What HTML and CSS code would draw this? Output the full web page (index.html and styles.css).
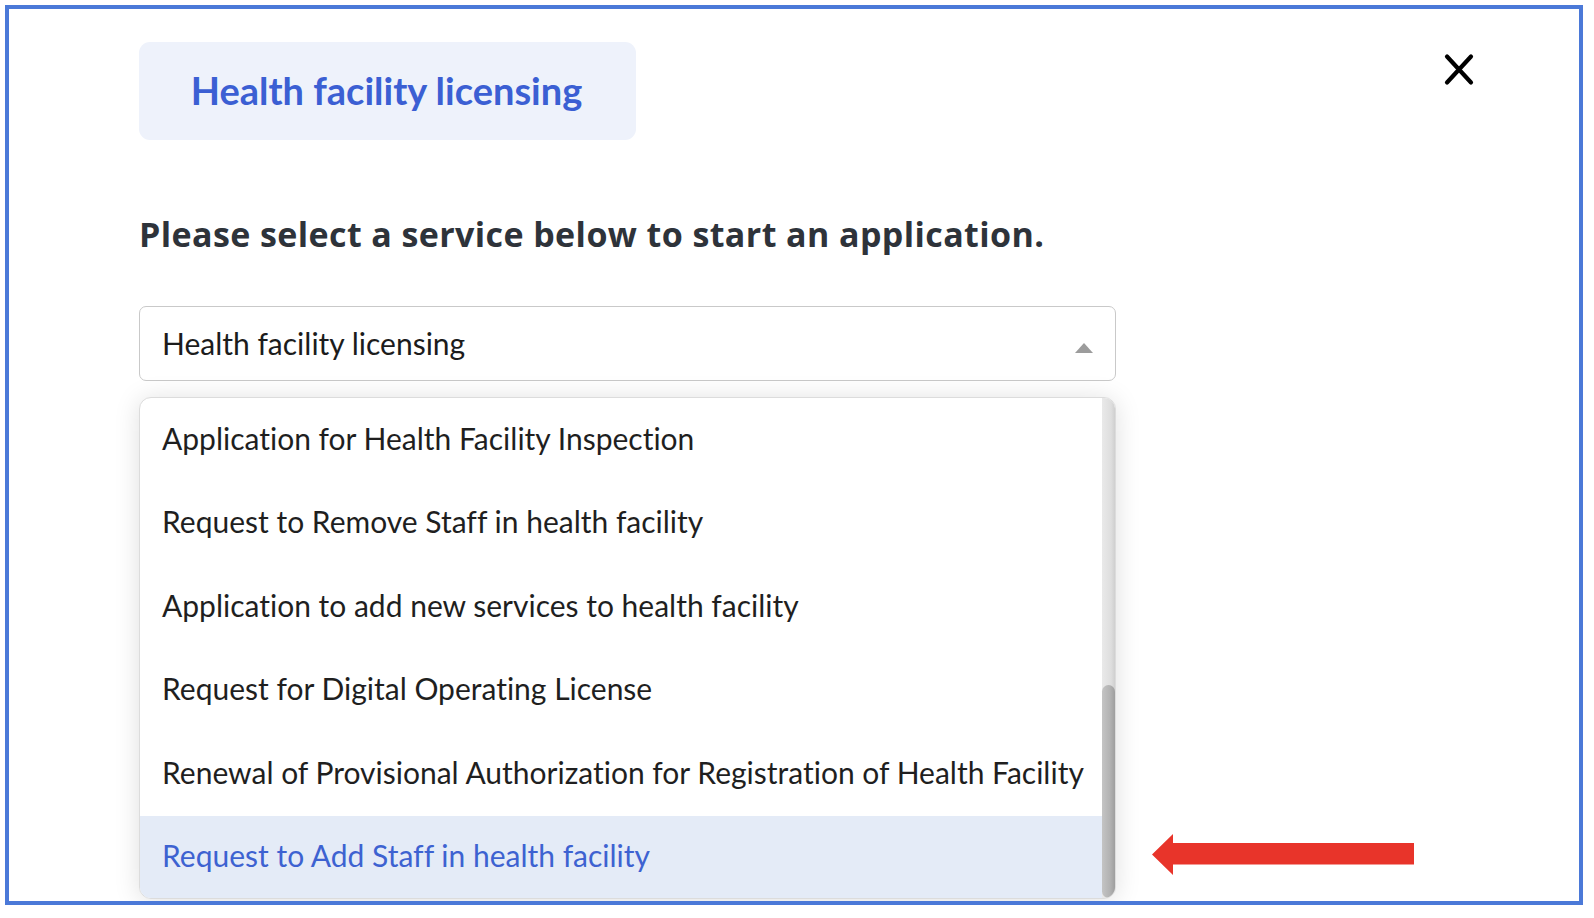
FILE: index.html
```html
<!DOCTYPE html>
<html lang="en">
<head>
<meta charset="utf-8">
<title>Health facility licensing</title>
<link rel="stylesheet" href="styles.css">
</head>
<body>
<div class="frame">
  <div class="content">
    <div class="pill">Health facility licensing</div>
    <h2 class="prompt">Please select a service below to start an application.</h2>
    <div class="select">
      <span class="select-value">Health facility licensing</span>
      <span class="caret"></span>
    </div>
    <div class="panel">
      <ul class="options">
        <li class="option">Application for Health Facility Inspection</li>
        <li class="option">Request to Remove Staff in health facility</li>
        <li class="option">Application to add new services to health facility</li>
        <li class="option">Request for Digital Operating License</li>
        <li class="option">Renewal of Provisional Authorization for Registration of Health Facility</li>
        <li class="option active">Request to Add Staff in health facility</li>
      </ul>
      <div class="scrollbar"><div class="thumb"></div></div>
    </div>
  </div>
  <button class="close" aria-label="Close">
    <svg width="30" height="33" viewBox="0 0 30 33"><path d="M3 3.5 L27 29.5 M27 3.5 L3 29.5" stroke="#000" stroke-width="4.2" stroke-linecap="round" fill="none"/></svg>
  </button>
  <svg class="arrow" width="262" height="41" viewBox="0 0 262 41"><polygon points="0,20.5 21,0 21,9 262,9 262,30.5 21,30.5 21,41" fill="#e8342a"/></svg>
</div>
</body>
</html>
```

FILE: styles.css
```css
* { box-sizing: border-box; }
html, body { margin: 0; padding: 0; background: #fff; }
body {
  font-family: Lato, "Open Sans", sans-serif;
  color: #1f1f1f;
  font-variant-ligatures: no-common-ligatures;
}

.frame {
  position: relative;
  margin: 5px 0 0 5px;
  width: 1578px;
  height: 900px;
  border: 4px solid #4b79d8;
  overflow: hidden;
  background: #fff;
}

.content {
  padding: 33px 0 0 130px;
  display: flex;
  flex-direction: column;
  align-items: flex-start;
}

.pill {
  width: 497px;
  height: 98px;
  border-radius: 11px;
  background: #eef2fb;
  color: #3b5fd3;
  font-weight: 700;
  font-size: 38px;
  line-height: 46px;
  display: flex;
  align-items: center;
  justify-content: center;
  padding: 0 2px 2px 0;
}

.prompt {
  margin: 73px 0 0 0;
  font-family: "Open Sans", Lato, sans-serif;
  font-size: 34px;
  line-height: 42px;
  font-weight: 700;
  letter-spacing: 0.4px;
  color: #2e333a;
}

.select {
  margin-top: 51px;
  width: 977px;
  height: 75px;
  border: 1px solid #c9c9c9;
  border-radius: 7px;
  display: flex;
  align-items: center;
  justify-content: space-between;
  padding: 0 22px 0 22px;
  font-size: 30px;
  line-height: 36px;
  color: #1c1c1c;
}
.select-value { padding-bottom: 2px; }
.caret {
  width: 0; height: 0;
  border-left: 9.5px solid transparent;
  border-right: 9.5px solid transparent;
  border-bottom: 10px solid #9c9c9c;
  margin-top: 9px;
}

.panel {
  margin-top: 16px;
  width: 977px;
  height: 502px;
  border: 1px solid #dcdcdc;
  border-radius: 12px;
  background: #fff;
  box-shadow: 0 2px 26px rgba(0,0,0,0.13);
  display: flex;
  overflow: hidden;
}

.options {
  list-style: none;
  margin: 0;
  padding: 0;
  flex: 1;
}
.option {
  height: 83.5px;
  display: flex;
  align-items: center;
  padding: 0 0 4px 22px;
  font-size: 30px;
  line-height: 36px;
  color: #1f1f1f;
  white-space: nowrap;
}
.option.active {
  background: #e4ebf7;
  color: #3d62d1;
}

.scrollbar {
  width: 13px;
  display: flex;
  flex-direction: column;
  justify-content: flex-end;
  background: linear-gradient(to right, #e9e9e9, #dedede 70%, #cfcfcf);
  border-top-right-radius: 10px;
}
.thumb {
  height: 213px;
  border-radius: 7px;
  background: linear-gradient(to right, #c4c4c4, #b3b3b3 60%, #9e9e9e);
}

.close {
  position: absolute;
  left: 1435px;
  top: 44px;
  width: 30px;
  height: 33px;
  padding: 0;
  border: 0;
  background: none;
  display: block;
}
.close svg { display: block; }

.arrow {
  position: absolute;
  left: 1143px;
  top: 825px;
  display: block;
}
```
